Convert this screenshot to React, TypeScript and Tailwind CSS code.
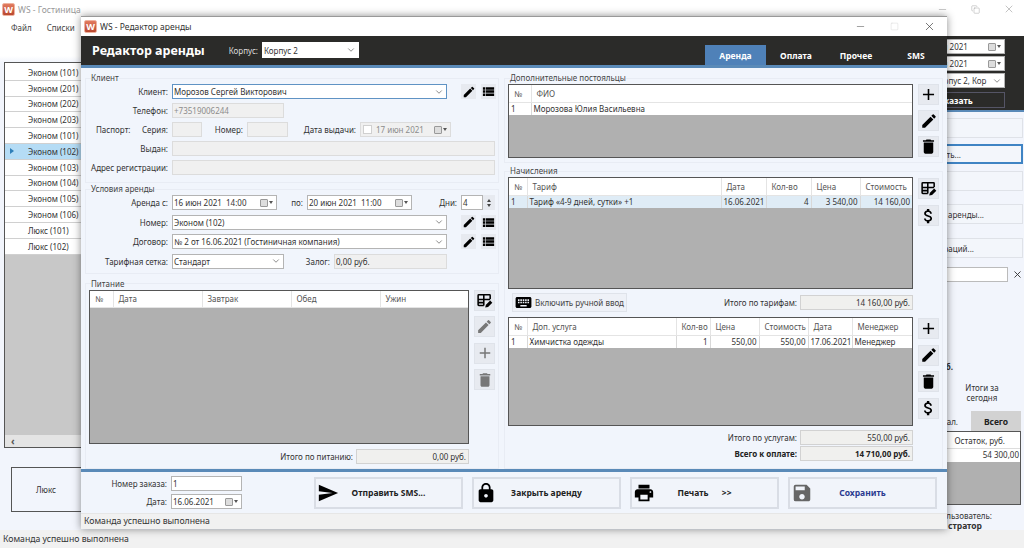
import type { ReactNode } from "react";
import { ChevronDown, Copy, Minus, Square, X } from "lucide-react";
import {
  MdAdd,
  MdAttachMoney,
  MdDelete,
  MdEdit,
  MdKeyboard,
  MdLock,
  MdPrint,
  MdSave,
  MdSend,
  MdViewList,
} from "react-icons/md";

type Col = { title: string; width?: number };

function Logo() {
  return (
    <div className="flex h-[13px] w-[13px] items-center justify-center rounded-[2px] border border-[#eeb3a0] bg-gradient-to-b from-[#e27b5f] to-[#b9482f] text-[9px] leading-none font-bold text-white">
      W
    </div>
  );
}

function Field({
  children,
  className = "",
  disabled,
  focus,
}: {
  children?: ReactNode;
  className?: string;
  disabled?: boolean;
  focus?: boolean;
}) {
  return (
    <div
      className={`flex h-[15px] items-center overflow-hidden border pl-[1px] whitespace-pre ${
        disabled
          ? "border-[#dcdcdc] bg-[#f0f0f0] text-[#8c8c8c]"
          : focus
            ? "border-[#5f93c4] bg-white"
            : "border-[#b4b4b4] bg-white"
      } ${className}`}
    >
      {children}
    </div>
  );
}

function Combo({ text, className = "", focus }: { text: string; className?: string; focus?: boolean }) {
  return (
    <Field className={`justify-between pr-[2px] ${className}`} focus={focus}>
      <span>{text}</span>
      <ChevronDown size={10} className="text-[#777]" />
    </Field>
  );
}

function DateBox({
  text,
  className = "",
  disabled,
  check,
}: {
  text: string;
  className?: string;
  disabled?: boolean;
  check?: boolean;
}) {
  return (
    <Field className={`justify-between pr-[3px] ${className}`} disabled={disabled}>
      <span className="flex items-center">
        {check && <span className="mr-[4px] ml-[1px] h-[9px] w-[9px] border border-[#d0d0d0] bg-white" />}
        {text}
      </span>
      <span className="flex items-center gap-[1px]">
        <span className="h-[8px] w-[8px] rounded-[1px] border border-[#999] bg-[#ddd]" />
        <span className="h-0 w-0 border-x-[2.5px] border-t-[3px] border-x-transparent border-t-[#555]" />
      </span>
    </Field>
  );
}

function Row({ label, children }: { label: ReactNode; children: ReactNode }) {
  return (
    <div className="flex h-[15px] items-center">
      <div className="mr-[4px] w-[82px] shrink-0 text-right whitespace-nowrap">{label}</div>
      {children}
    </div>
  );
}

function Tool({ children, big, muted, className = "" }: { children: ReactNode; big?: boolean; muted?: boolean; className?: string }) {
  return (
    <div
      className={`flex shrink-0 items-center justify-center bg-[#e7eaf0] ${muted ? "text-[#777]" : "text-black"} ${
        big ? "h-[21px] w-[21px] border border-[#dfe3ea]" : "h-[15px] w-[15px]"
      } ${className}`}
    >
      {children}
    </div>
  );
}

function EditList() {
  return (
    <>
      <Tool className="ml-[14px]">
        <MdEdit size={14} />
      </Tool>
      <Tool className="ml-[5px]">
        <MdViewList size={15} />
      </Tool>
    </>
  );
}

function TableEdit() {
  return (
    <svg viewBox="0 0 24 24" width="17" height="17" fill="none" stroke="black" strokeWidth="2.2">
      <path d="M20 10V5a1 1 0 0 0-1-1H4a1 1 0 0 0-1 1v13a1 1 0 0 0 1 1h7M3 10.5h17M3 15h9M11 4v15" />
      <path d="M13 22l1-4 6-6 3 3-6 6z" fill="black" stroke="none" />
    </svg>
  );
}

function Grid({
  cols,
  rows,
  heightClass,
  selected,
}: {
  cols: Col[];
  rows: string[][];
  heightClass: string;
  selected?: boolean;
}) {
  return (
    <div className={`overflow-hidden border border-[#555] bg-[#b0b0b0] ${heightClass}`}>
      <table className="w-full table-fixed border-collapse">
        <colgroup>
          {cols.map((c) => (
            <col key={c.title} style={c.width ? { width: c.width } : undefined} />
          ))}
        </colgroup>
        <thead>
          <tr className="h-[17px] bg-white text-[#555]">
            {cols.map((c) => (
              <th key={c.title} className="border-r border-b border-[#e4e4e4] pl-[5px] text-left font-normal whitespace-nowrap last:border-r-0">
                {c.title}
              </th>
            ))}
          </tr>
        </thead>
        <tbody>
          {rows.map((row) => (
            <tr key={row[0]} className={`h-[13px] ${selected ? "bg-[#dfecf6]" : "bg-white"}`}>
              {row.map((cell, i) => (
                <td
                  key={i}
                  className={`overflow-hidden border-r border-[#d8d8d8] px-[2px] leading-[12px] whitespace-nowrap last:border-r-0 ${
                    /^[\d\s,]+$/.test(cell) && i > 0 ? "text-right" : ""
                  }`}
                >
                  {cell}
                </td>
              ))}
            </tr>
          ))}
        </tbody>
      </table>
    </div>
  );
}

function Group({ title, className = "", children }: { title: string; className?: string; children: ReactNode }) {
  return (
    <fieldset className={`border border-[#e8ecf4] ${className}`}>
      <legend className="ml-[5px] text-[8px] leading-[10px] text-[#444]">{title}</legend>
      {children}
    </fieldset>
  );
}

function Total({ label, value, bold }: { label: string; value: string; bold?: boolean }) {
  return (
    <div className={`flex items-center justify-end gap-[3px] ${bold ? "font-['DejaVu_Sans'] font-bold text-[#222]" : ""}`}>
      <span className="whitespace-nowrap">{label}</span>
      <div className="flex h-[15px] w-[113px] items-center justify-end border border-[#d2d2d2] bg-[#f0f0ee] pr-[2px]">
        {value}
      </div>
    </div>
  );
}

function BigButton({
  icon,
  text,
  iconClass = "text-black",
  textClass = "text-[#222]",
}: {
  icon: ReactNode;
  text: string;
  iconClass?: string;
  textClass?: string;
}) {
  return (
    <div className="relative flex h-[32px] w-[149px] items-center justify-center border-2 border-[#d9dde5] bg-[#f1f4fa] font-['DejaVu_Sans'] text-[8.5px] font-bold whitespace-pre">
      <span className={`absolute left-[1px] ${iconClass}`}>{icon}</span>
      <span className={textClass}>{text}</span>
    </div>
  );
}

function SideRow({ children, className = "", focus }: { children?: ReactNode; className?: string; focus?: boolean }) {
  return (
    <div
      className={`flex h-[20px] w-[136px] items-center justify-end border ${
        focus ? "border-2 border-[#3f84c4]" : "border-[#dfe2e8]"
      } bg-[#f3f6fb] ${className}`}
    >
      {children}
    </div>
  );
}

export default function App() {
  const rooms = [
    "Эконом (101)",
    "Эконом (201)",
    "Эконом (202)",
    "Эконом (203)",
    "Эконом (101)",
    "Эконом (102)",
    "Эконом (103)",
    "Эконом (104)",
    "Эконом (105)",
    "Эконом (106)",
    "Люкс (101)",
    "Люкс (102)",
  ];

  return (
    <div className="relative h-[548px] w-[1024px] overflow-hidden bg-[#f2f5fc] font-['Noto_Sans',sans-serif] text-[8px] leading-[11px] text-[#333]">
      {/* main window behind the dialog */}
      <div className="h-[36px] bg-white">
        <div className="flex h-[18px] items-center pl-[2px] text-[8.5px] text-[#999]">
          <Logo />
          <span className="ml-[3px]">WS - Гостиница</span>
          <div className="ml-auto flex items-center gap-[23px] pr-[9px] text-[#888]">
            <Minus size={11} strokeWidth={1} />
            <Copy size={9} strokeWidth={1} />
            <X size={12} strokeWidth={1} />
          </div>
        </div>
        <div className="flex h-[18px] items-center gap-[15px] pl-[11px] text-[#444]">
          <span>Файл</span>
          <span>Списки</span>
        </div>
      </div>

      <div className="flex h-[494px]">
        <div className="w-[887px] bg-[linear-gradient(#ffffff_0,#ffffff_20px,#f2f5fc_26px)] pt-[26px] pl-[4px]">
          <div className="flex h-[386px] w-[200px] flex-col border border-[#555] bg-[#c8c8c8]">
            <div className="h-[2px] bg-white" />
            {rooms.map((room, i) => (
              <div
                key={i}
                className={`flex h-[15.8px] shrink-0 items-center border-b border-[#d0d0d0] pl-[5px] ${
                  i === 5 ? "bg-[#b5dcf5]" : "bg-white"
                }`}
              >
                <span className="h-0 w-0 border-y-[3px] border-l-[4px] border-y-transparent border-l-[#2f7fb8]" style={{ opacity: i === 5 ? 1 : 0 }} />
                <span className="ml-[14px]">{room}</span>
              </div>
            ))}
            <div className="mt-auto flex h-[12px] items-center bg-[#e4e4e4] pl-[6px] text-[#555]">
              <span className="text-[10px] leading-none font-bold">‹</span>
            </div>
          </div>
          <div className="mt-[19px] ml-[7px] flex h-[45px] w-[200px] items-center border border-[#555] pl-[24px]">Люкс</div>
        </div>

        <div className="w-[137px] shrink-0">
          <div className="h-[76px] border-b-2 border-[#5a8ab8] bg-[#2b2b29] pt-[3px] pl-[13px]">
            <div className="flex w-[105px] flex-col gap-[2px]">
              <DateBox text="16 июн 2021" className="pl-[19px]" />
              <DateBox text="20 июн 2021" className="pl-[19px]" />
              <Combo text="Корпус 2, Кор" className="pl-[33px]" />
              <div className="mt-[2px] flex h-[16px] items-center justify-center border border-[#556] font-['DejaVu_Sans'] text-[8.5px] font-bold text-white">
                Показать
              </div>
            </div>
          </div>
          <SideRow className="mt-[6px]" />
          <SideRow className="mt-[6px] pr-[60px]" focus>
            Изменить...
          </SideRow>
          <SideRow className="mt-[7px]" />
          <SideRow className="mt-[13px] pr-[38px]">Договор аренды...</SideRow>
          <SideRow className="mt-[14px] pr-[48px]">История операций...</SideRow>
          <div className="mt-[9px] flex items-center">
            <div className="h-[15px] w-[121px] border border-[#bbb] bg-white" />
            <X size={11} className="ml-[4px] text-[#333]" />
          </div>
          <div className="mt-[79px] w-[66px] text-right font-bold">руб.</div>
          <div className="mt-[11px] ml-[70px] w-[50px] text-center leading-[10px]">
            Итоги за
            <br />
            сегодня
          </div>
          <div className="mt-[8px] flex h-[20px] items-center">
            <span className="w-[71px] text-right">Нал.</span>
            <div className="ml-[13px] flex h-full w-[50px] items-center justify-center bg-[#d2d2d2] font-['DejaVu_Sans'] text-[8.5px] font-bold text-[#222]">
              Всего
            </div>
          </div>
          <div className="h-[74px] w-[134px] border border-[#555] bg-[#b0b0b0]">
            <div className="flex h-[17px] items-center justify-end border-b border-[#ddd] bg-white pr-[15px]">Остаток, руб.</div>
            <div className="h-[13px] bg-white pr-[1px] text-right">54 300,00</div>
          </div>
          <div className="mt-[5px] w-[105px] text-right">Пользователь:</div>
          <div className="-mt-[1px] w-[95px] text-right font-['DejaVu_Sans'] text-[8.5px] font-bold whitespace-nowrap">стратор</div>
        </div>
      </div>

      <div className="flex h-[18px] items-center bg-[#f1f1f1] pl-[3px] text-[8.7px]">Команда успешно выполнена</div>

      {/* editor dialog */}
      <div className="absolute top-[16px] left-[81px] flex h-[513px] w-[866px] flex-col border-t border-[#999] bg-[#f1f5fc] shadow-[0_0_8px_rgba(0,0,0,0.45)]">
        <div className="flex h-[19px] shrink-0 items-center bg-white pl-[3px] text-[8.5px]">
          <Logo />
          <span className="ml-[3px]">WS - Редактор аренды</span>
          <div className="ml-auto flex items-center gap-[24px] pr-[11px]">
            <Minus size={11} strokeWidth={1.2} className="text-[#555]" />
            <Square size={9} strokeWidth={1} className="text-[#ccc]" />
            <X size={13} strokeWidth={1.2} className="text-[#333]" />
          </div>
        </div>

        <div className="flex h-[32px] shrink-0 border-b-[3px] border-[#5a8ab8] bg-[#2b2b29]">
          <div className="flex items-center pb-[1px]">
            <div className="ml-[11px] w-[125px] font-['DejaVu_Sans'] text-[12.5px] font-bold whitespace-nowrap text-white">
              Редактор аренды
            </div>
            <span className="ml-[11px] w-[30px] text-right text-[#ddd]">Корпус:</span>
            <Combo text="Корпус 2" className="ml-[4px] h-[16px] w-[97px] border-white" />
          </div>
          <div className="ml-auto flex items-end pr-[1px] font-['DejaVu_Sans'] text-[8.5px] font-bold text-white">
            <div className="flex h-[20px] w-[61px] items-center justify-center bg-[#4f81b8]">Аренда</div>
            <div className="flex h-[20px] w-[60px] items-center justify-center">Оплата</div>
            <div className="flex h-[20px] w-[60px] items-center justify-center">Прочее</div>
            <div className="flex h-[20px] w-[60px] items-center justify-center">SMS</div>
          </div>
        </div>

        <div className="flex h-[401px] shrink-0 gap-[5px] pt-[5px] pl-[4px]">
          <div className="flex w-[414px] flex-col">
            <Group title="Клиент" className="pb-[7px]">
              <div className="flex flex-col gap-[4px] pt-[1px]">
                <Row label="Клиент:">
                  <Combo text="Морозов Сергей Викторович" className="w-[275px]" focus />
                  <EditList />
                </Row>
                <Row label="Телефон:">
                  <Field disabled className="w-[112px]">+73519006244</Field>
                </Row>
                <Row
                  label={
                    <div className="flex justify-between pl-[10px]">
                      <span>Паспорт:</span>
                      <span>Серия:</span>
                    </div>
                  }
                >
                  <Field disabled className="w-[30px]" />
                  <span className="ml-[4px] w-[37px] text-right">Номер:</span>
                  <Field disabled className="ml-[4px] w-[41px]" />
                  <span className="w-[68px] text-right whitespace-nowrap">Дата выдачи:</span>
                  <DateBox disabled check text="17 июн 2021" className="ml-[4px] w-[91px]" />
                </Row>
                <Row label="Выдан:">
                  <Field disabled className="w-[323px]" />
                </Row>
                <Row label="Адрес регистрации:">
                  <Field disabled className="w-[323px]" />
                </Row>
              </div>
            </Group>

            <Group title="Условия аренды" className="mt-[1px] pb-[4px]">
              <div className="flex flex-col gap-[4.5px] pt-[1px]">
                <Row label="Аренда с:">
                  <DateBox text="16 июн 2021  14:00" className="w-[105px]" />
                  <span className="w-[26px] text-right">по:</span>
                  <DateBox text="20 июн 2021  11:00" className="ml-[4px] w-[105px]" />
                  <span className="w-[45px] text-right">Дни:</span>
                  <Field className="ml-[4px] w-[22px]">4</Field>
                  <div className="flex h-[15px] w-[12px] flex-col items-center justify-center gap-[2px] bg-[#e7eaf0]">
                    <span className="h-0 w-0 border-x-[2.5px] border-b-[3px] border-x-transparent border-b-[#444]" />
                    <span className="h-0 w-0 border-x-[2.5px] border-t-[3px] border-x-transparent border-t-[#444]" />
                  </div>
                </Row>
                <Row label="Номер:">
                  <Combo text="Эконом (102)" className="w-[275px]" />
                  <EditList />
                </Row>
                <Row label="Договор:">
                  <Combo text="№ 2 от 16.06.2021 (Гостиничная компания)" className="w-[275px]" />
                  <EditList />
                </Row>
                <Row label="Тарифная сетка:">
                  <Combo text="Стандарт" className="w-[112px]" />
                  <span className="w-[46px] text-right">Залог:</span>
                  <Field disabled className="ml-[4px] w-[113px] text-[#333]">0,00 руб.</Field>
                </Row>
              </div>
            </Group>

            <Group title="Питание" className="mt-[5px] flex-1">
              <div className="mt-[1px] flex gap-[5px] pl-[3px]">
                <div className="w-[380px]">
                  <Grid
                    heightClass="h-[154px]"
                    cols={[
                      { title: "№", width: 23 },
                      { title: "Дата", width: 89 },
                      { title: "Завтрак", width: 89 },
                      { title: "Обед", width: 89 },
                      { title: "Ужин" },
                    ]}
                    rows={[]}
                  />
                  <div className="mt-[5px]">
                    <Total label="Итого по питанию:" value="0,00 руб." />
                  </div>
                </div>
                <div className="flex flex-col gap-[5.5px]">
                  <Tool big><TableEdit /></Tool>
                  <Tool big muted><MdEdit size={17} /></Tool>
                  <Tool big muted><MdAdd size={18} /></Tool>
                  <Tool big muted><MdDelete size={18} /></Tool>
                </div>
              </div>
            </Group>
          </div>

          <div className="flex w-[439px] flex-col">
            <Group title="Дополнительные постояльцы" className="pb-[4px]">
              <div className="mt-[1px] flex gap-[5px] pl-[3px]">
                <div className="w-[405px]">
                  <Grid
                    heightClass="h-[74px]"
                    cols={[{ title: "№", width: 22 }, { title: "ФИО" }]}
                    rows={[["1", "Морозова Юлия Васильевна"]]}
                  />
                </div>
                <div className="flex flex-col gap-[5px]">
                  <Tool big><MdAdd size={19} /></Tool>
                  <Tool big><MdEdit size={18} /></Tool>
                  <Tool big><MdDelete size={19} /></Tool>
                </div>
              </div>
            </Group>

            <Group title="Начисления" className="mt-[3px] flex-1">
              <div className="mt-[1px] flex gap-[5px] pl-[3px]">
                <div className="w-[405px]">
                  <Grid
                    selected
                    heightClass="h-[112px]"
                    cols={[
                      { title: "№", width: 18 },
                      { title: "Тариф", width: 194 },
                      { title: "Дата", width: 45 },
                      { title: "Кол-во", width: 45 },
                      { title: "Цена", width: 49 },
                      { title: "Стоимость" },
                    ]}
                    rows={[["1", "Тариф «4-9 дней, сутки» +1", "16.06.2021", "4", "3 540,00", "14 160,00"]]}
                  />
                  <div className="mt-[4px] mb-[5px] flex h-[19px] items-center">
                    <div className="ml-[4px] flex h-[19px] w-[115px] items-center gap-[2px] border border-[#dfe3ea] bg-[#eef1f7] pl-[1px] text-[#444]">
                      <MdKeyboard size={19} className="text-black" />
                      <span className="whitespace-nowrap">Включить ручной ввод</span>
                    </div>
                    <div className="ml-auto">
                      <Total label="Итого по тарифам:" value="14 160,00 руб." />
                    </div>
                  </div>
                  <Grid
                    heightClass="h-[109px]"
                    cols={[
                      { title: "№", width: 18 },
                      { title: "Доп. услуга", width: 149 },
                      { title: "Кол-во", width: 34 },
                      { title: "Цена", width: 49 },
                      { title: "Стоимость", width: 49 },
                      { title: "Дата", width: 44 },
                      { title: "Менеджер" },
                    ]}
                    rows={[["1", "Химчистка одежды", "1", "550,00", "550,00", "17.06.2021", "Менеджер"]]}
                  />
                  <div className="mt-[4px] flex flex-col gap-[1px]">
                    <Total label="Итого по услугам:" value="550,00 руб." />
                    <Total bold label="Всего к оплате:" value="14 710,00 руб." />
                  </div>
                </div>
                <div className="flex flex-col">
                  <div className="flex flex-col gap-[6px] pt-[1px]">
                    <Tool big><TableEdit /></Tool>
                    <Tool big><MdAttachMoney size={20} /></Tool>
                  </div>
                  <div className="mt-[92px] flex flex-col gap-[5.5px]">
                    <Tool big><MdAdd size={19} /></Tool>
                    <Tool big><MdEdit size={18} /></Tool>
                    <Tool big><MdDelete size={19} /></Tool>
                    <Tool big><MdAttachMoney size={20} /></Tool>
                  </div>
                </div>
              </div>
            </Group>
          </div>
        </div>

        <div className="flex h-[44px] shrink-0 items-center border-t-[3px] border-[#5a8ab8] pl-[4px]">
          <div className="flex flex-col gap-[3px]">
            <Row label="Номер заказа:">
              <Field className="w-[71px]">1</Field>
            </Row>
            <Row label="Дата:">
              <DateBox text="16.06.2021" className="w-[71px]" />
            </Row>
          </div>
          <div className="ml-[72px] flex gap-[9px]">
            <BigButton icon={<MdSend size={22} />} text="Отправить SMS..." />
            <BigButton icon={<MdLock size={22} />} text="Закрыть аренду" />
            <BigButton icon={<MdPrint size={22} />} text="Печать      >>" />
            <BigButton icon={<MdSave size={22} />} text="Сохранить" iconClass="text-[#666]" textClass="text-[#2a3a90]" />
          </div>
        </div>

        <div className="flex min-h-0 flex-1 items-center border-t border-[#e6e6e6] bg-[#f1f1f1] pl-[3px] text-[8.7px]">
          Команда успешно выполнена
        </div>
      </div>
    </div>
  );
}
